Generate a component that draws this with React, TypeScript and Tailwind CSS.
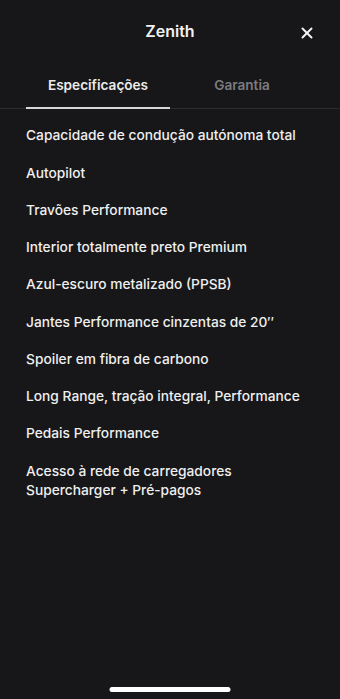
import { X } from "lucide-react";

const specs: React.ReactNode[] = [
  "Capacidade de condução autónoma total",
  "Autopilot",
  "Travões Performance",
  "Interior totalmente preto Premium",
  "Azul-escuro metalizado (PPSB)",
  "Jantes Performance cinzentas de 20′′",
  "Spoiler em fibra de carbono",
  "Long Range, tração integral, Performance",
  "Pedais Performance",
  <>
    Acesso à rede de carregadores
    <br />
    Supercharger + Pré-pagos
  </>,
];

export default function App() {
  return (
    <div
      className="relative w-[340px] h-[699px] bg-[#171719] text-white overflow-hidden"
      style={{ fontFamily: "Inter, 'Noto Sans', sans-serif" }}
    >
      {/* Header */}
      <div className="relative h-[66px] flex items-center justify-center">
        <h1 className="text-[16px] font-semibold text-[#f2f2f2] -mt-1">Zenith</h1>
        <button className="absolute right-[20px] top-[20px] p-1 text-[#f2f2f2]">
          <X size={18} strokeWidth={2.6} />
        </button>
      </div>

      {/* Tabs */}
      <div className="relative border-b border-[#2c2c2e]">
        <div className="flex px-[26px]">
          <div className="w-[144px] flex flex-col items-center">
            <span className="text-[13.6px] font-semibold text-[#ececec] h-[41px] leading-[38px]">
              Especificações
            </span>
            <div className="w-full h-[2px] bg-[#d6d6d6] mb-[-1px]" />
          </div>
          <div className="w-[144px] flex justify-center">
            <span className="text-[13.6px] font-semibold text-[#7c7c80] h-[41px] leading-[38px]">
              Garantia
            </span>
          </div>
        </div>
      </div>

      {/* Specs list */}
      <ul className="pl-[26px] pr-[4px] pt-[17.25px] flex flex-col gap-[17.75px]">
        {specs.map((s, i) => (
          <li
            key={i}
            className="text-[13.75px] font-medium text-[#efefef] leading-[19.5px] whitespace-nowrap"
          >
            {s}
          </li>
        ))}
      </ul>

      {/* Home indicator */}
      <div className="absolute bottom-[7px] left-1/2 -translate-x-1/2 w-[121px] h-[5px] rounded-full bg-white" />
    </div>
  );
}
